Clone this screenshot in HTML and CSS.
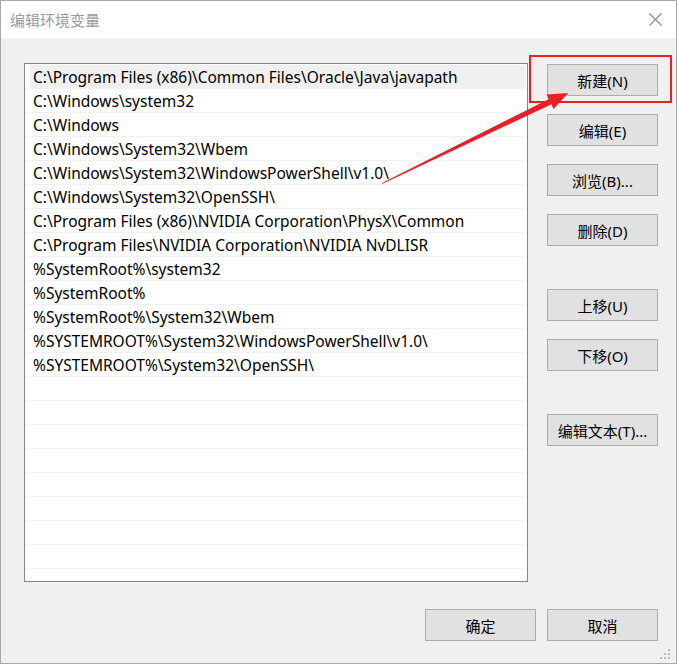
FILE: index.html
```html
<!DOCTYPE html>
<html lang="zh-CN">
<head>
    <meta charset="UTF-8">
    <title>编辑环境变量</title>
    <link rel="stylesheet" href="styles.css">
</head>
<body>
    <div class="window">
        <div class="titlebar">
            <span class="title">编辑环境变量</span>
            <svg class="close" width="13" height="13" viewBox="0 0 13 13">
                <path d="M0.5 0.5 L12.5 12.5 M12.5 0.5 L0.5 12.5" stroke="#8a8a8a" stroke-width="1.1" fill="none"/>
            </svg>
        </div>

        <div class="content">
            <div class="main">
                <div class="list">
                    <div class="row sel"><div class="cell">C:\Program Files (x86)\Common Files\Oracle\Java\javapath</div></div>
                    <div class="row"><div class="cell">C:\Windows\system32</div></div>
                    <div class="row"><div class="cell">C:\Windows</div></div>
                    <div class="row"><div class="cell">C:\Windows\System32\Wbem</div></div>
                    <div class="row"><div class="cell">C:\Windows\System32\WindowsPowerShell\v1.0\</div></div>
                    <div class="row"><div class="cell">C:\Windows\System32\OpenSSH\</div></div>
                    <div class="row"><div class="cell">C:\Program Files (x86)\NVIDIA Corporation\PhysX\Common</div></div>
                    <div class="row"><div class="cell">C:\Program Files\NVIDIA Corporation\NVIDIA NvDLISR</div></div>
                    <div class="row"><div class="cell">%SystemRoot%\system32</div></div>
                    <div class="row"><div class="cell">%SystemRoot%</div></div>
                    <div class="row"><div class="cell">%SystemRoot%\System32\Wbem</div></div>
                    <div class="row"><div class="cell">%SYSTEMROOT%\System32\WindowsPowerShell\v1.0\</div></div>
                    <div class="row"><div class="cell">%SYSTEMROOT%\System32\OpenSSH\</div></div>
                    <div class="row"><div class="cell"></div></div>
                    <div class="row"><div class="cell"></div></div>
                    <div class="row"><div class="cell"></div></div>
                    <div class="row"><div class="cell"></div></div>
                    <div class="row"><div class="cell"></div></div>
                    <div class="row"><div class="cell"></div></div>
                    <div class="row"><div class="cell"></div></div>
                    <div class="row"><div class="cell"></div></div>
                    <div class="row"><div class="cell"></div></div>
                </div>

                <div class="side">
                    <button class="btn">新建(N)</button>
                    <button class="btn">编辑(E)</button>
                    <button class="btn">浏览(B)...</button>
                    <button class="btn">删除(D)</button>
                    <button class="btn spaced">上移(U)</button>
                    <button class="btn">下移(O)</button>
                    <button class="btn spaced">编辑文本(T)...</button>
                </div>
            </div>

            <div class="footer">
                <button class="btn">确定</button>
                <button class="btn">取消</button>
            </div>
        </div>

        <!-- screenshot annotation -->
        <div class="mark"></div>
        <svg class="arrow" width="677" height="664" viewBox="0 0 677 664">
            <polygon points="381,184.5 383,182.5 548.6,99.2 546.5,94.5 568,93 553.5,108.9 551.4,104.2" fill="#ea1e26"/>
        </svg>

        <svg class="grip" width="12" height="12" viewBox="0 0 12 12">
            <rect x="8" y="0" width="2" height="2"/>
            <rect x="4" y="4" width="2" height="2"/>
            <rect x="8" y="4" width="2" height="2"/>
            <rect x="0" y="8" width="2" height="2"/>
            <rect x="4" y="8" width="2" height="2"/>
            <rect x="8" y="8" width="2" height="2"/>
        </svg>
    </div>
</body>
</html>
```

FILE: styles.css
```css
body { margin: 0; font-family: "Noto Sans", "Noto Sans CJK SC", sans-serif; }
.window { position: relative; width: 677px; height: 664px; box-sizing: border-box; border: 1px solid #a8a8a8; background: #f0f0f0; display: flex; flex-direction: column; }

.titlebar { height: 37px; background: #fff; display: flex; align-items: center; justify-content: space-between; padding: 0 14px 0 9px; }
.title { font-size: 15px; color: #9a9a9a; font-family: "Noto Sans CJK SC", sans-serif; }
.close { display: block; }

.content { flex: 1; padding: 25px 18px 0 23px; }
.main { display: flex; gap: 19px; }

.list { width: 504px; height: 519px; box-sizing: border-box; border: 1px solid #82878f; background: #fff; padding: 1px; overflow: hidden; }
.row { border-bottom: 1px solid #f0f0f0; padding-left: 4px; }
.cell { height: 23px; line-height: 25px; overflow: hidden; padding-left: 3px; font-size: 15.5px; color: #000; white-space: nowrap; }
.row.sel .cell { background: #f0f0f0; }

.side { display: flex; flex-direction: column; gap: 18px; margin-top: 1px; }
.btn { width: 111px; height: 32px; box-sizing: border-box; background: #e1e1e1; border: 1px solid #adadad; border-radius: 0; padding: 0; font-family: "Noto Sans", "Noto Sans CJK SC", sans-serif; font-size: 15px; color: #000; }
.btn.spaced { margin-top: 25px; }

.footer { display: flex; justify-content: flex-end; gap: 11px; margin-top: 27px; }

.mark { position: absolute; left: 528px; top: 54px; width: 143px; height: 48px; box-sizing: border-box; border: 2px solid #ea1e26; }
.arrow { position: absolute; left: -1px; top: -1px; pointer-events: none; }
.grip { position: absolute; right: 4px; bottom: 2px; fill: #bcbcbc; }
```
